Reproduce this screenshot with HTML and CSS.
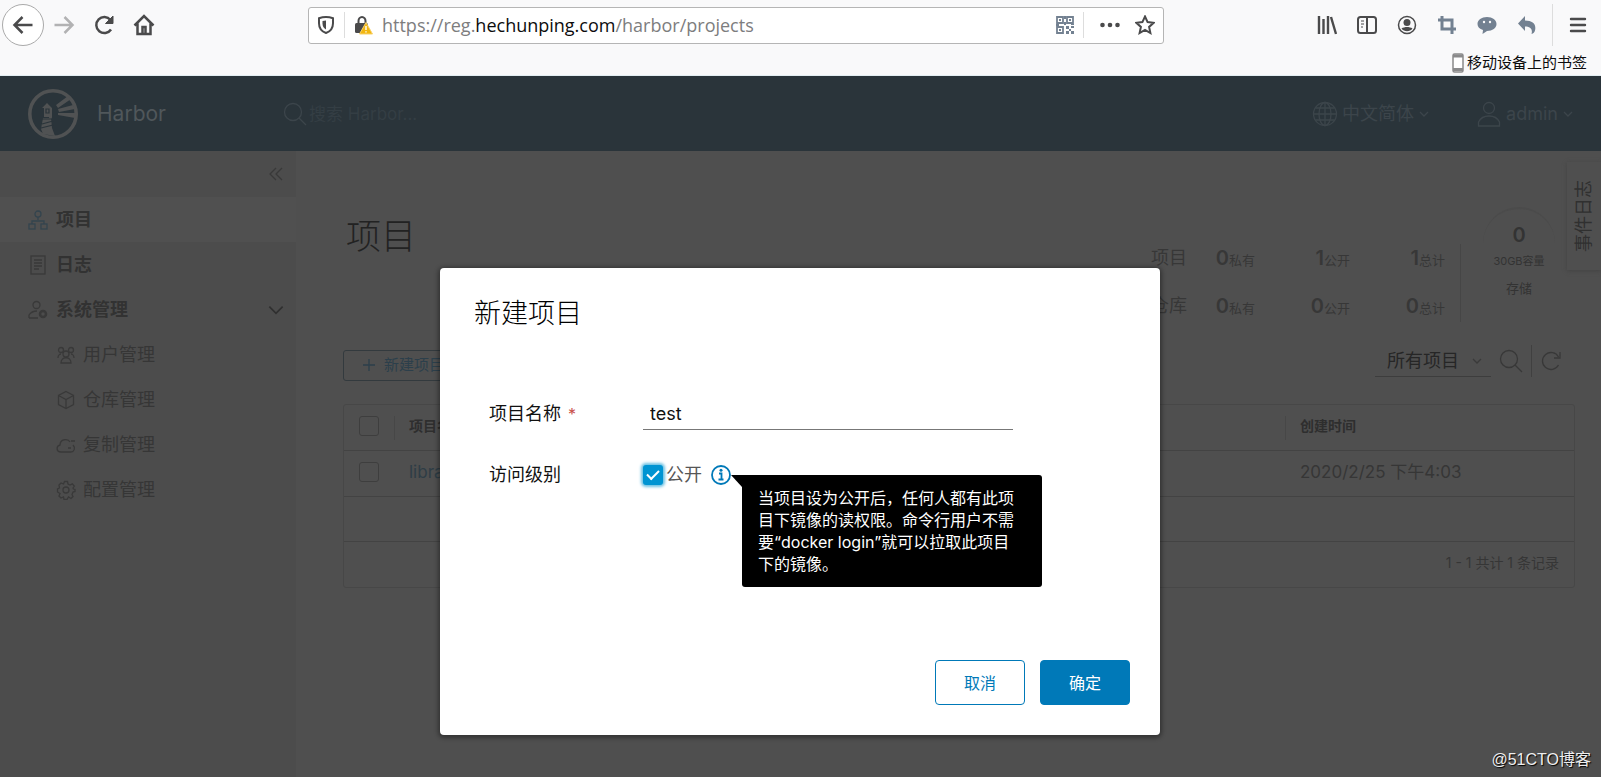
FILE: index.html
```html
<!DOCTYPE html>
<html lang="zh-CN">
<head>
<meta charset="utf-8">
<title>Harbor</title>
<link rel="stylesheet" href="styles.css">
</head>
<body>
<svg class="defs" aria-hidden="true">
  <symbol id="caret" viewBox="0 0 12 12"><path d="M2 4l4 4 4-4"/></symbol>
  <symbol id="search" viewBox="0 0 24 24"><circle cx="10" cy="10" r="8.500"/><path d="M16 16l7 7"/></symbol>
</svg>

<div class="browser">
  <div class="toolbar">
    <nav class="nav-buttons" aria-label="导航">
      <button class="nav-btn back" aria-label="后退"><svg viewBox="0 0 24 24"><path d="M21.500 12H4M11.500 4L3.500 12l8 8"/></svg></button>
      <button class="nav-btn forward" aria-label="前进"><svg viewBox="0 0 24 24"><path d="M2.500 12H20M12.500 4l8 8-8 8"/></svg></button>
      <button class="nav-btn" aria-label="刷新"><svg viewBox="0 0 24 24"><path d="M19 16.500A8 8 0 1 1 18.500 7"/><path d="M21 3v7.500h-7.500z" fill="currentColor" stroke-width="1"/></svg></button>
      <button class="nav-btn" aria-label="主页"><svg viewBox="0 0 24 24"><path d="M2.500 12.500L12 3l9.500 9.500M5.500 10.500V21h13V10.500"/><path d="M10.500 20v-6h3v6"/></svg></button>
    </nav>
    <div class="urlbar">
      <svg class="i20" viewBox="0 0 20 20"><path d="M10 2c2.500 0 5 .5 7 1.200v5C17 13 14 16.500 10 18c-4-1.500-7-5-7-9.800v-5C5 2.500 7.500 2 10 2z"/><path d="M10 5.500v9C7.500 13 6.500 11 6.500 8.500V6z" fill="currentColor" stroke="none"/></svg>
      <span class="bar-sep"></span>
      <svg class="i20" viewBox="0 0 20 20"><path d="M5.500 9V6a3.500 4 0 0 1 7 0V9"/><rect x="2" y="8" width="13" height="10" rx="1.500" fill="currentColor" stroke="none"/><path d="M13 7.500L19.500 19h-13z" fill="#f2b60f" stroke="#f9d26a" stroke-width="1"/><path d="M13 11v4M13 16.200v1.400" stroke="#fff" stroke-width="1.400"/></svg>
      <div class="url">https://reg.<b>hechunping.com</b>/harbor/projects</div>
      <svg class="i20 slate" viewBox="0 0 20 20"><path d="M2 2h6v6H2zM12 2h6v6h-6zM2 12h6v6H2z" stroke-width="1.800"/><path d="M4 4h2v2H4zM14 4h2v2h-2zM4 14h2v2H4zM11 11h3v3h-3zM14 14h2v2h-2zM16 11h3v2h-3zM11 16h3v3h-3zM16 16h3v3h-3zM9 1h2v3H9zM9 7h2v3H9zM1 9h3v2H1zM16 9h3v1h-3z" fill="currentColor" stroke="none"/></svg>
      <span class="bar-sep"></span>
      <svg class="i20 dots" viewBox="0 0 20 20"><g fill="currentColor" stroke="none"><circle cx="2.500" cy="10" r="2.300"/><circle cx="10" cy="10" r="2.300"/><circle cx="17.500" cy="10" r="2.300"/></g></svg>
      <svg class="i20" viewBox="0 0 20 20"><path d="M10 1.500l2.600 5.600 6 .7-4.500 4.100 1.300 6.100L10 15l-5.400 3 1.300-6.100L1.400 7.800l6-.7z"/></svg>
    </div>
    <div class="tools">
      <svg class="i20" viewBox="0 0 20 20"><path d="M2 1v18M6.500 4v15M11 1v18M14 2l5 17" stroke-width="2.400"/></svg>
      <svg class="i20" viewBox="0 0 20 20"><rect x="1" y="2" width="18" height="16" rx="2.500"/><path d="M10 2v16"/><path d="M4 6h3M4 9h3M4 12h2" stroke-width="1.200"/></svg>
      <svg class="i20" viewBox="0 0 20 20"><circle cx="10" cy="10" r="8.500" stroke-width="1.500"/><circle cx="10" cy="7.500" r="3.500" fill="currentColor" stroke="none"/><path d="M4.500 13.500c3-2 8-2 11 0-2.500 3.700-8.500 3.700-11 0z" fill="currentColor" stroke="none"/></svg>
      <svg class="i20 slate" viewBox="0 0 20 20"><path d="M1 5h14v14M5 1v13h14" stroke-width="3"/></svg>
      <svg class="i20 slate" viewBox="0 0 20 20"><path d="M10 2c5.500 0 9.500 3 9.500 7s-4 7-9.500 7l-4.500 3 .5-4C2.500 14 .5 12 .5 9c0-4 4-7 9.500-7z" fill="currentColor" stroke="none"/><circle cx="7" cy="7" r="1.200" fill="#f9f9fa" stroke="none"/><circle cx="13" cy="7" r="1.200" fill="#f9f9fa" stroke="none"/></svg>
      <svg class="i20 slate" viewBox="0 0 20 20"><path d="M8 1v4.500c8 0 11.500 4 10 10-.5 2-1.500 3-3.500 3.500C16 14 13 11.500 8 11.500V16L1 8.500z" fill="currentColor" stroke="none"/></svg>
      <span class="tool-sep"></span>
      <button class="menu-btn" aria-label="菜单"><svg class="i20" viewBox="0 0 20 20"><path d="M3 4h14M3 10h14M3 16h14" stroke-width="2.400" stroke-linecap="round"/></svg></button>
    </div>
  </div>
  <div class="bookmarks">
    <svg class="phone" viewBox="0 0 12 20"><rect x="1" y="1" width="10" height="18" rx="1.500" fill="#fff"/><path d="M1 3h10M1 16.500h10" stroke-width="3"/></svg>
    <span>移动设备上的书签</span>
  </div>
</div>

<div class="app">
  <header class="app-header">
    <a class="brand" href="#">
      <svg class="logo" viewBox="0 0 50 50"><circle cx="25" cy="25" r="23.200" fill="none" stroke="currentColor" stroke-width="3.600"/><g fill="currentColor"><path d="M28 16l12-9 3 3-13 9zM30 20l15-4 2 4-16 3zM30 24l17 0v5l-17-3z"/><path d="M14 19l5-5 5 5v9c0 3-3 3-3 0h-5v-9z"/><path d="M15 29h8l1 10 3 8-12-2-2-5z"/></g><g stroke="#2a343a" stroke-width="1.200"><path d="M14 35l11-3M13 39l12-3M14 30h10M18 20h3v4h-3z"/></g></svg>
      <span>Harbor</span>
    </a>
    <label class="global-search"><svg class="i24"><use href="#search"/></svg><input type="text" placeholder="搜索 Harbor..." aria-label="搜索"></label>
    <button class="head-btn lang"><svg class="i26" viewBox="0 0 26 26"><circle cx="13" cy="13" r="11.500"/><ellipse cx="13" cy="13" rx="6" ry="11.500"/><path d="M13 1.500v23M1.500 13h23M3.500 7h19M3.500 19h19"/></svg><span>中文简体</span><svg class="i12"><use href="#caret"/></svg></button>
    <button class="head-btn"><svg class="i26" viewBox="0 0 26 26"><circle cx="13" cy="7" r="5.500"/><path d="M2.500 25v-4c2-4 6-6 10.500-6s8.500 2 10.500 6v4z"/></svg><span>admin</span><svg class="i12"><use href="#caret"/></svg></button>
  </header>

  <div class="app-body">
    <aside class="sidebar">
      <button class="collapse" aria-label="折叠"><svg class="i16" viewBox="0 0 16 16"><path d="M8 2L2 8l6 6M14 2L8 8l6 6"/></svg></button>
      <a class="item active" href="#"><svg class="i20 blue" viewBox="0 0 20 20"><circle cx="10" cy="4" r="3"/><rect x="1" y="14" width="6" height="5"/><rect x="13" y="14" width="6" height="5"/><path d="M10 7v3M4 14v-3h12v3"/></svg>项目</a>
      <a class="item" href="#"><svg class="i20" viewBox="0 0 20 20"><rect x="3" y="1" width="14" height="18"/><path d="M6 5h8M6 8h8M6 11h8M6 14h5"/></svg>日志</a>
      <button class="item"><svg class="i20" viewBox="0 0 20 20"><circle cx="8.500" cy="5" r="3.500"/><path d="M1 18v-3c2-3 5-4 8-4M1 18h9"/><circle cx="15" cy="14" r="3" stroke-width="2.500"/></svg>系统管理<svg class="i20 chevron" viewBox="0 0 12 12"><path d="M2 4l4 4 4-4"/></svg></button>
      <a class="item sub" href="#"><svg class="i20" viewBox="0 0 20 20"><circle cx="10" cy="9" r="3"/><path d="M5 18c0-7 10-7 10 0zM2 13c0-3 2-4 3-4M18 13c0-3-2-4-3-4"/><circle cx="5" cy="5" r="2.500"/><circle cx="15" cy="5" r="2.500"/></svg>用户管理</a>
      <a class="item sub" href="#"><svg class="i20" viewBox="0 0 20 20"><path d="M10 1.500l7.500 4v9l-7.500 4-7.500-4v-9zM2.500 5.500L10 9.500l7.500-4M10 9.500v9"/></svg>仓库管理</a>
      <a class="item sub" href="#"><svg class="i20" viewBox="0 0 20 20"><path d="M17 10c3 3 1 7-2 7H5c-5 0-5-6-1-7 0-6 8-7 10-3M12 13h3M15 6h4"/></svg>复制管理</a>
      <a class="item sub" href="#"><svg class="i20" viewBox="0 0 20 20"><circle cx="10" cy="10" r="3"/><path d="M8.500 1.500h3l.5 2.500 2 1 2.300-1.200 2 2.200L17 8l.5 1 1.500.5v2l-2 .5-1 2.500 1 2-2 2-2.500-1.500-1.500 2.500h-3L7.500 17 5 18l-2-2 1-2.500L1.500 12V9l2-1L3 5l2-2 2.500 1z"/></svg>配置管理</a>
    </aside>

    <main class="content">
      <section class="overview">
        <h1>项目</h1>
        <div class="stats">
          <dl class="counts">
            <dt>项目</dt><dd><b>0</b>私有</dd><dd><b>1</b>公开</dd><dd><b>1</b>总计</dd>
            <dt>仓库</dt><dd><b>0</b>私有</dd><dd><b>0</b>公开</dd><dd><b>0</b>总计</dd>
          </dl>
          <div class="gauge"><b>0</b><small>30GB容量</small><span>存储</span></div>
        </div>
      </section>
      <div class="actions">
        <button class="new-btn"><svg class="i16" viewBox="0 0 16 16"><path d="M8 2v12M2 8h12"/></svg>新建项目</button>
        <div class="filters">
          <div class="select-wrap"><select aria-label="项目筛选"><option>所有项目</option></select><svg class="i12"><use href="#caret"/></svg></div>
          <button class="icon-btn" aria-label="搜索"><svg class="i24"><use href="#search"/></svg></button>
          <button class="icon-btn refresh" aria-label="刷新"><svg class="i24" viewBox="0 0 24 24"><path d="M19.500 16a8.500 8.500 0 1 1 0-8M21 3v6h-6"/></svg></button>
        </div>
      </div>
      <table class="grid">
        <thead><tr><th class="check"><input type="checkbox" aria-label="全选"></th><th class="sep">项目名称</th><th class="sep time">创建时间</th></tr></thead>
        <tbody>
          <tr><td class="check"><input type="checkbox" aria-label="选择 library"></td><td><a href="#">library</a></td><td class="time">2020/2/25 下午4:03</td></tr>
          <tr><td colspan="3"></td></tr>
        </tbody>
        <tfoot><tr><td colspan="3">1 - 1 共计 1 条记录</td></tr></tfoot>
      </table>
    </main>
  </div>
  <button class="event-tab"><span>事件日志</span></button>

  <div class="overlay">
    <form class="modal" role="dialog" aria-labelledby="dlg-title">
      <h2 id="dlg-title">新建项目</h2>
      <div class="fields">
        <label for="pname">项目名称<span class="req">*</span></label>
        <input id="pname" class="text" type="text" value="test">
        <span>访问级别</span>
        <div class="access">
          <input id="pub" type="checkbox" checked><label for="pub">公开</label>
          <div class="info">
            <svg class="i20" viewBox="0 0 20 20"><circle cx="10" cy="10" r="9"/><path d="M8 8.500h2.500V14M7.500 14.500h5" /><circle cx="10" cy="5.200" r="1.500" fill="currentColor" stroke="none"/></svg>
            <div class="tooltip" role="tooltip">当项目设为公开后，任何人都有此项目下镜像的读权限。命令行用户不需要“docker login”就可以拉取此项目下的镜像。</div>
          </div>
        </div>
      </div>
      <footer><button type="button" class="btn">取消</button><button type="submit" class="btn primary">确定</button></footer>
    </form>
  </div>
  <div class="watermark">@51CTO博客</div>
</div>
</body>
</html>
```

FILE: styles.css
```css
* { box-sizing: border-box; }
body {
  margin: 0;
  min-height: 100vh;
  display: flex;
  flex-direction: column;
  font-family: Inter, "Noto Sans CJK SC", sans-serif;
  font-size: 18px;
  line-height: 24px;
  color: #333;
  overflow: hidden;
}
button, input, select { font: inherit; color: inherit; background: none; border: 0; padding: 0; margin: 0; }
a { color: inherit; text-decoration: none; }
svg { flex: none; fill: none; stroke: currentColor; stroke-width: 2; }
.defs { position: absolute; width: 0; height: 0; }
.i12 { width: 12px; height: 12px; }
.i16 { width: 16px; height: 16px; }
.i20 { width: 20px; height: 20px; }
.i24 { width: 24px; height: 24px; }
.i26 { width: 26px; height: 26px; }

/* browser frame */
.browser { background: #f9f9fa; color: #4a4a4b; border-bottom: 1px solid #e3eef2; }
.toolbar { display: flex; align-items: center; height: 50px; padding-right: 13px; }
.nav-buttons { display: flex; align-items: center; width: 308px; padding-left: 2px; }
.nav-btn { width: 40px; height: 42px; display: grid; place-items: center; }
.nav-btn svg { width: 24px; height: 24px; stroke-width: 2.5; }
.back { width: 42px; background: #fff; border: 1px solid #aaa; border-radius: 50%; }
.forward { color: #b2b2b3; }
.urlbar {
  width: 856px;
  flex: 0 1 auto;
  height: 37px;
  display: flex;
  align-items: center;
  padding: 0 8px 0 7px;
  background: #fff;
  border: 1px solid #b5b5b5;
  border-radius: 3px;
}
.url { flex: 1; margin-left: 9px; font-family: "Open Sans", sans-serif; font-size: 18px; color: #7d7d7e; }
.url b { font-weight: 400; color: #0c0c0d; }
.bar-sep { width: 1px; height: 26px; margin: 0 8px; background: #ddd; }
.dots { margin: 0 15px 0 8px; }
.slate { color: #738191; }
.tools { display: flex; align-items: center; gap: 20px; margin-left: auto; }
.tool-sep { width: 1px; height: 42px; margin: 0 -5px; background: #ddd; }
.menu-btn { display: flex; }
.bookmarks { display: flex; justify-content: flex-end; align-items: center; gap: 3px; height: 25px; padding-right: 14px; font-size: 15px; color: #0c0c0d; }
.phone { width: 12px; height: 20px; color: #8a8a8b; stroke-width: 1.5; }

/* application */
.app { flex: 1; position: relative; display: flex; flex-direction: column; background: #4f4f4f; color: #333; }
.app svg { stroke-width: 1.3; }
.app-header { display: flex; align-items: center; height: 75px; padding: 0 27px 0 28px; background: #2a343a; color: #3c454b; }
.brand { display: flex; align-items: center; gap: 19px; width: 255px; font-size: 21px; color: #50575b; }
.logo { width: 50px; height: 50px; }
.app-header .logo { stroke: none; color: #505253; }
.global-search { flex: 1; display: flex; align-items: center; gap: 2px; }
.global-search input { width: 200px; font-size: 17px; color: #343e44; }
.global-search input::placeholder { color: #343e44; opacity: 1; }
.head-btn { display: flex; align-items: center; gap: 4px; }
.lang { margin-right: 46px; }
.app-body { flex: 1; display: flex; }
.sidebar { width: 296px; flex: none; background: #4c4c4c; color: #323232; }
.sidebar svg { color: #393939; }
.collapse { display: flex; align-items: center; justify-content: flex-end; width: 100%; height: 46px; padding-right: 12px; }
.item { display: flex; align-items: center; gap: 8px; width: 100%; height: 45px; padding: 0 12px 0 28px; font-weight: 600; text-align: left; }
.active { background: #505050; }
.sidebar .blue { color: #33444e; }
.sidebar .chevron { margin: 0 -2px 0 auto; stroke-width: 1; color: #303030; }
.sub { padding-left: 56px; gap: 7px; font-weight: 400; color: #363636; }
.content { flex: 1; padding: 53px 26px 0 47px; }
.overview { display: flex; justify-content: space-between; height: 134px; }
h1 { margin: 8px 0 0 3px; font-size: 35px; line-height: 48px; font-weight: 300; color: #222; }
.stats { display: flex; align-items: flex-start; }
.counts { display: grid; grid-template-columns: 36px 68px 95px 95px; row-gap: 18px; margin: 40px 0 0; padding-right: 15px; border-right: 1px solid #464646; color: #373737; }
.counts dt { line-height: 28px; }
.counts dd { margin: 0; text-align: right; font-size: 13px; line-height: 28px; }
.counts b { font-size: 20px; font-weight: 600; }
.gauge { display: flex; flex-direction: column; align-items: center; width: 72px; margin: 3px 20px 0 22px; padding-top: 14px; color: #333; border-top: 2px solid #4b4b4b; border-radius: 36px 36px 0 0; }
.gauge b { font-size: 20px; font-weight: 600; }
.gauge small { margin-top: 4px; font-size: 11px; line-height: 20px; }
.gauge span { margin-top: 5px; font-size: 13px; }
.actions { display: flex; justify-content: space-between; align-items: center; height: 46px; padding-right: 12px; }
.new-btn { display: flex; align-items: center; gap: 7px; height: 31px; margin-top: 8px; padding: 0 17px; font-size: 15px; color: #2c3f4b; border: 1px solid #333a3e; border-radius: 3px; }
.filters { display: flex; align-items: center; }
.select-wrap { display: flex; align-items: center; width: 116px; height: 31px; padding: 0 8px 0 12px; border-bottom: 1px solid #3d3d3d; color: #3a3a3a; }
.select-wrap select { flex: 1; min-width: 0; appearance: none; color: #262626; }
.icon-btn { display: flex; align-items: center; height: 32px; margin-left: 8px; color: #383838; }
.refresh { padding-left: 7px; border-left: 1px solid #404040; }
.grid { width: 100%; margin-top: 20px; border: 1px solid #474747; border-spacing: 0; border-radius: 3px; color: #363636; }
.grid th, .grid td { height: 46px; padding: 0 15px 3px; border-bottom: 1px solid #434343; text-align: left; }
.grid tbody tr:last-child td, .grid tfoot td { height: 45px; }
.grid th { font-size: 14px; font-weight: 600; color: #2e2e2e; }
.grid .check { width: 48px; }
.grid .time { width: 289px; font-size: 17px; }
.grid th.time { font-size: 14px; }
.grid .sep { background: linear-gradient(#474747, #474747) 0 50% / 1px 24px no-repeat; }
.grid tfoot td { border-bottom: 0; font-size: 14px; text-align: right; }
.grid a { color: #2e3d46; font-size: 17px; }
input[type="checkbox"] { appearance: none; display: block; width: 20px; height: 20px; border: 1px solid #3e3e3e; border-radius: 3px; }
.event-tab { position: absolute; right: 0; top: 86px; height: 108px; width: 34px; display: grid; place-items: center; color: #303030; background: #4f4f4f; box-shadow: 0 1px 4px #434343; }
.event-tab span { writing-mode: vertical-rl; text-orientation: sideways; transform: rotate(180deg); }

/* dialog */
.overlay { position: absolute; inset: 0; display: flex; justify-content: center; align-items: flex-start; padding: 192px 1px 0 0; }
.modal { width: 720px; padding: 30px; background: #fff; color: #111; border-radius: 4px; box-shadow: 0 1px 4px 2px rgba(0, 0, 0, .35); }
.modal h2 { margin: 0 0 68px 4px; font-size: 27px; line-height: 32px; font-weight: 300; color: #000; }
.fields { display: grid; grid-template-columns: 154px 370px; row-gap: 33px; align-items: center; padding-left: 19px; min-height: 262px; align-content: start; }
.req { margin-left: 7px; color: #c8504a; font-size: 16px; }
.text { height: 32px; padding: 0 7px; border-bottom: 1px solid #777; border-radius: 0; outline: 0; }
.access { display: flex; align-items: center; color: #565656; }
.modal #pub { width: 20px; height: 20px; margin-right: 3px; border: 0; background: #0094d2; box-shadow: 0 0 3px 2px #6bc1e3; display: grid; place-items: center; }
.modal #pub::before { content: ""; width: 10px; height: 5px; margin-bottom: 4px; border: solid #fff; border-width: 0 0 2px 2px; transform: rotate(-45deg); }
.info { position: relative; display: flex; margin-left: 9px; color: #0079b8; }
.info svg { stroke-width: 1.8; }
.tooltip { position: absolute; left: 31px; top: 10px; width: 300px; padding: 12px 24px 12px 16px; font-size: 16px; line-height: 22px; color: #fff; background: #000; border-radius: 0 3px 3px 3px; }
.tooltip::before { content: ""; position: absolute; right: 100%; top: 0; border: solid transparent; border-width: 12px 0 0 11px; border-top-color: #000; }
.modal footer { display: flex; justify-content: flex-end; gap: 15px; }
.btn { width: 90px; height: 45px; font-size: 16px; color: #0079b8; border: 1px solid #0079b8; border-radius: 4px; }
.primary { color: #fff; background: #0079b8; }
.watermark { position: absolute; right: 10px; bottom: 5px; font-family: "Liberation Sans", "Noto Sans CJK SC", sans-serif; font-size: 16px; color: #eee; text-shadow: 1px 1px 1px #000; }
```
